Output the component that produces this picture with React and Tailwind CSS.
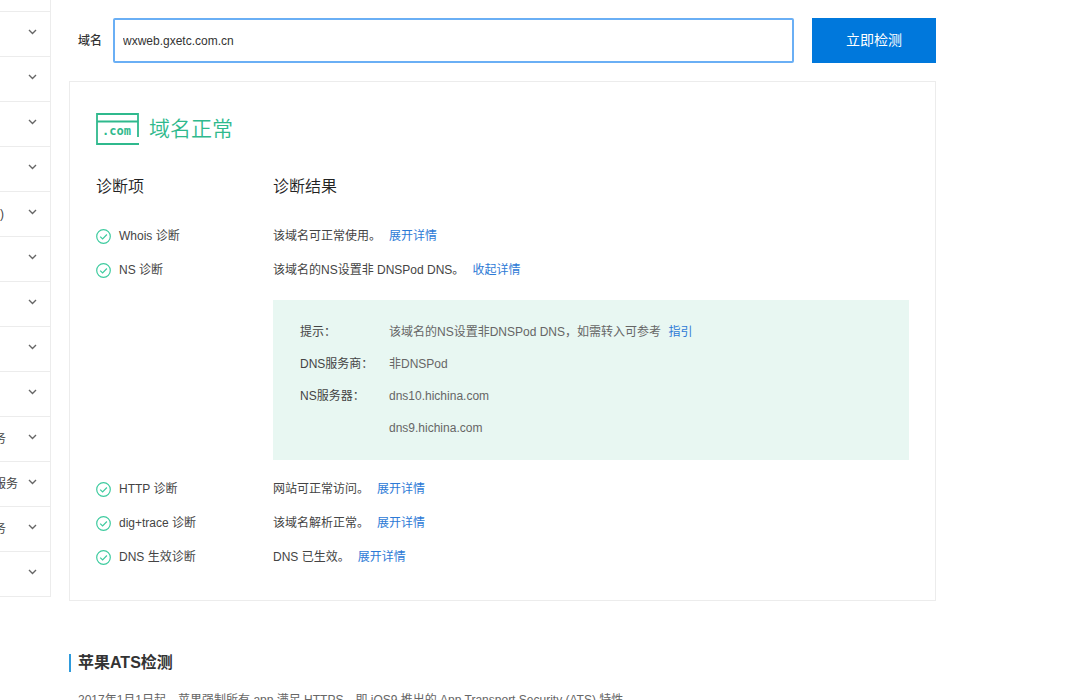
// src/pages/DomainCheck.jsx
import React, { useState } from "react";

const menuItems = ["", "", "", "", ")", "", "", "", "", "务", "服务", "务", ""];

const checks = [
  { id: "whois", name: "Whois 诊断", result: "该域名可正常使用。", open: false },
  { id: "ns", name: "NS 诊断", result: "该域名的NS设置非 DNSPod DNS。", open: true },
  { id: "http", name: "HTTP 诊断", result: "网站可正常访问。", open: false },
  { id: "dig", name: "dig+trace 诊断", result: "该域名解析正常。", open: false },
  { id: "dns", name: "DNS 生效诊断", result: "DNS 已生效。", open: false },
];

const ChevronIcon = () => (
  <svg width="9" height="6" viewBox="0 0 9 6" fill="none" className="mb-1 shrink-0">
    <path d="M1 1l3.5 3.4L8 1" stroke="#666" strokeWidth="1.4" />
  </svg>
);

const CheckIcon = () => (
  <svg width="15" height="15" viewBox="0 0 15 15" fill="none" stroke="#3ecb9f" className="shrink-0">
    <circle cx="7.5" cy="7.5" r="6.8" strokeWidth="1.2" />
    <path d="M4.2 7.6l2.4 2.3 4.3-4.4" strokeWidth="1.2" />
  </svg>
);

// browser window with the domain suffix inside, open at the lower right corner
const DomainIcon = () => (
  <svg width="43" height="32" viewBox="0 0 43 32" className="shrink-0">
    <path d="M42 24V1H1v30h42M1 8.5h41" fill="none" stroke="#2fb98d" strokeWidth="1.8" />
    <text x="6" y="22" fill="#2fb98d" className="font-['DejaVu_Sans_Mono',monospace] text-[12px] font-bold">
      .com
    </text>
  </svg>
);

const NsDetail = () => (
  <dl className="mt-[13px] mb-3 grid grid-cols-[89px_1fr] bg-[#e8f7f2] px-[27px] py-4 leading-8">
    <dt>提示：</dt>
    <dd className="text-[#666]">
      该域名的NS设置非DNSPod DNS，如需转入可参考{" "}
      <a href="#guide" className="ml-1 text-[#2d7ad6]">指引</a>
    </dd>
    <dt>DNS服务商：</dt>
    <dd className="text-[#666]">非DNSPod</dd>
    <dt>NS服务器：</dt>
    <dd className="text-[#666]">
      <p>dns10.hichina.com</p>
      <p>dns9.hichina.com</p>
    </dd>
  </dl>
);

const App = () => {
  const [domain, setDomain] = useState("wxweb.gxetc.com.cn");
  const [items, setItems] = useState(checks);

  const toggle = (id) => {
    setItems((prev) => prev.map((item) => (item.id === id ? { ...item, open: !item.open } : item)));
  };

  return (
    <div className="flex h-screen items-start overflow-hidden bg-white font-['Liberation_Sans','Noto_Sans_CJK_SC',sans-serif] text-[12px] text-[#444]">
      <ul className="w-[51px] shrink-0 border-r border-b border-[#ececec] pt-[11px]">
        {menuItems.map((label, i) => (
          <li key={i} className="flex h-[45px] items-center border-t border-[#ececec]">
            <button type="button" aria-label={label || "菜单"} className="flex w-full items-center justify-between pr-[13px]">
              <span className={label === ")" ? "" : "-ml-1.5 whitespace-nowrap"}>{label}</span>
              <ChevronIcon />
            </button>
          </li>
        ))}
      </ul>

      <main className="ml-[18px] flex-1 pt-[18px] pr-36">
        <form className="flex items-center" onSubmit={(e) => e.preventDefault()}>
          <label htmlFor="domain" className="w-11 shrink-0 pl-[9px] font-medium text-[#333]">域名</label>
          <input
            id="domain"
            type="text"
            value={domain}
            onChange={(e) => setDomain(e.target.value)}
            className="h-[45px] min-w-0 flex-1 rounded-xs border-2 border-[#6aaff5] px-2 text-[#333] outline-none"
          />
          <button type="submit" className="ml-[18px] h-[45px] w-[124px] bg-[#0078dc] text-[14px] text-white">
            立即检测
          </button>
        </form>

        <section className="mt-[18px] border border-[#ececec] px-[26px] pt-[31px] pb-[26px]">
          <h2 className="flex h-8 items-center gap-2.5 text-[21px] font-[350] text-[#2fb98d]">
            <DomainIcon />
            域名正常
          </h2>
          <table className="mt-[26px] w-full table-fixed text-left">
            <thead>
              <tr className="text-[16px] text-[#222]">
                <th className="w-[177px] pb-4 leading-8 font-[350]">诊断项</th>
                <th className="pb-4 leading-8 font-[350]">诊断结果</th>
              </tr>
            </thead>
            <tbody>
              {items.map((item) => (
                <tr key={item.id} className="align-top">
                  <td>
                    <div className="flex h-[34px] items-center gap-2">
                      <CheckIcon />
                      {item.name}
                    </div>
                  </td>
                  <td>
                    <div className="flex h-[34px] items-center gap-2">
                      {item.result}
                      <button type="button" onClick={() => toggle(item.id)} className="text-[#2d7ad6]">
                        {item.open ? "收起详情" : "展开详情"}
                      </button>
                    </div>
                    {item.id === "ns" && item.open && <NsDetail />}
                  </td>
                </tr>
              ))}
            </tbody>
          </table>
        </section>

        <section className="mt-[53px]">
          <h2 className="border-l-2 border-[#2f9bdc] pl-[7px] text-[16px] leading-[18px] font-bold text-[#333]">苹果ATS检测</h2>
          <p className="mt-4 pl-[9px] leading-6 text-[#666]">
            2017年1月1日起，苹果强制所有 app 满足 HTTPS，即 iOS9 推出的 App Transport Security (ATS) 特性
          </p>
        </section>
      </main>
    </div>
  );
};

export default App;
